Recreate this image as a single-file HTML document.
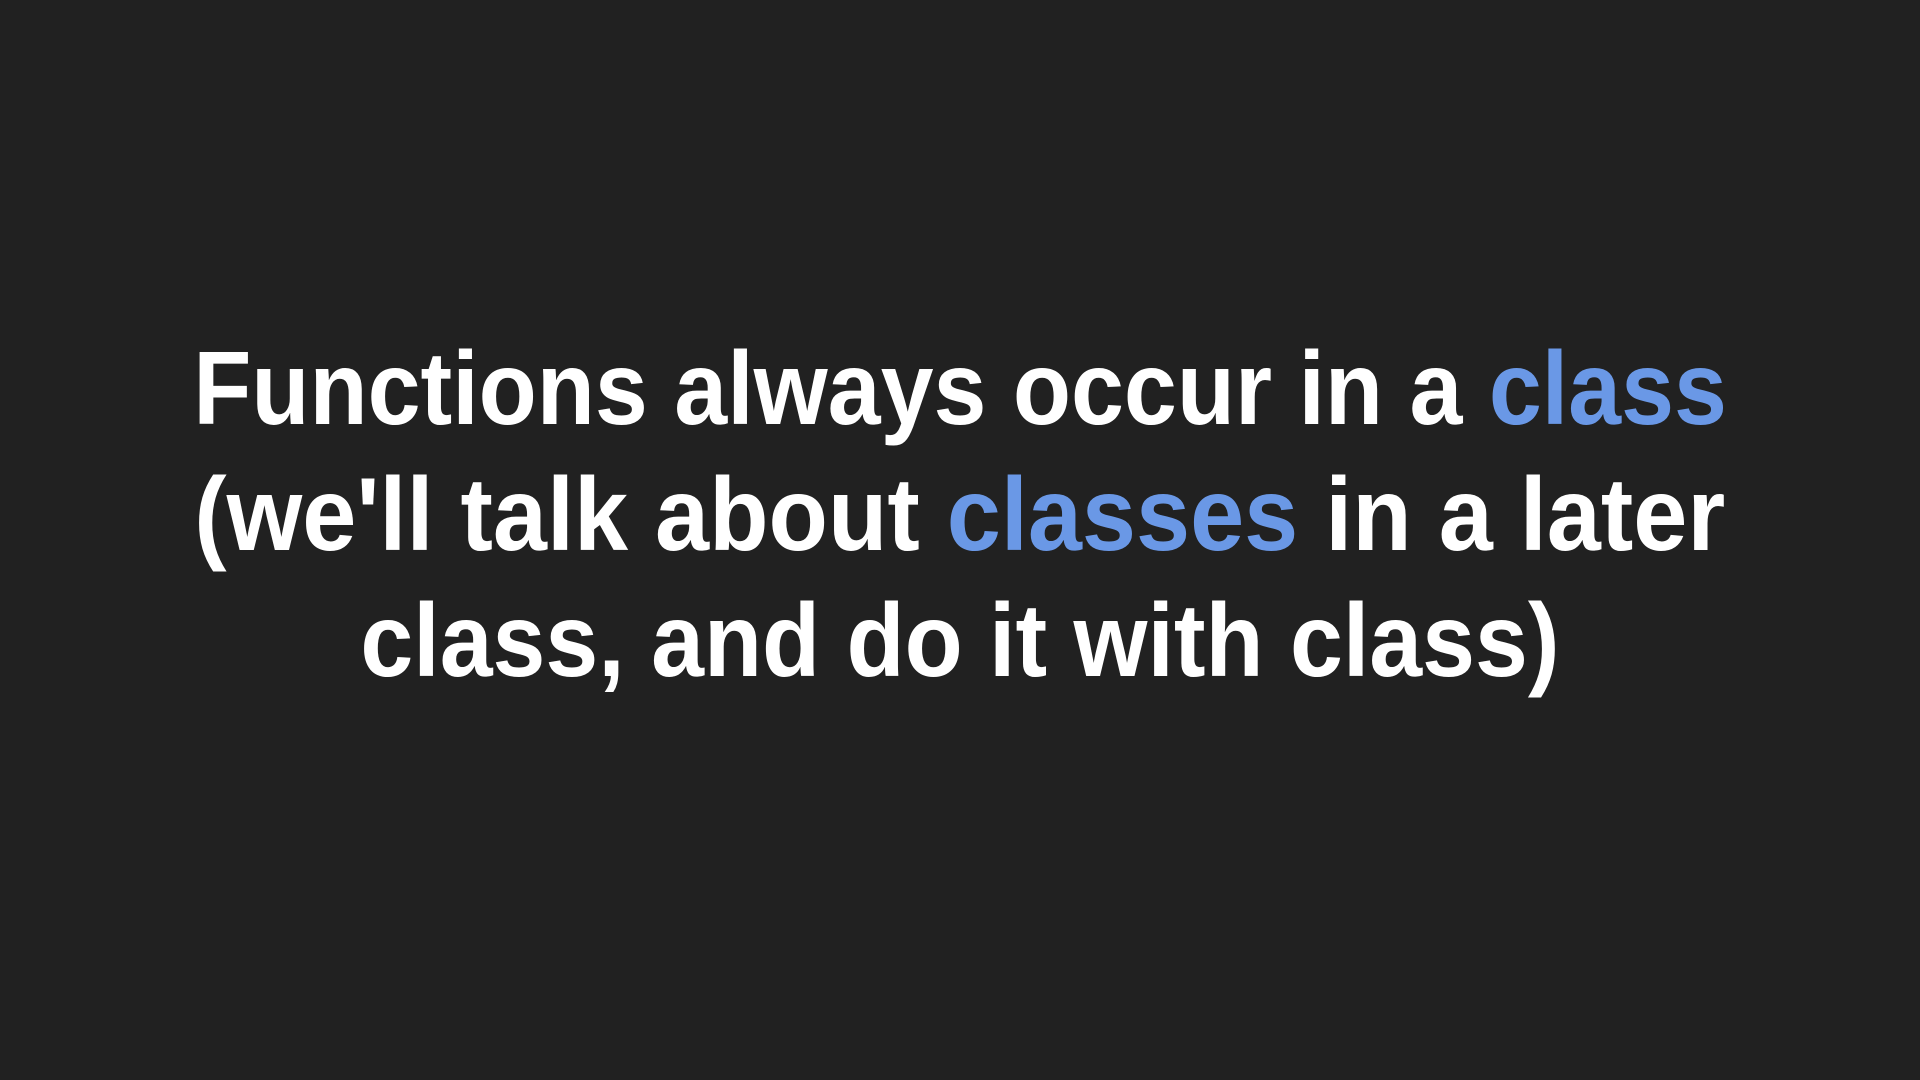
<!DOCTYPE html>
<html><head><meta charset="utf-8"><style>
html,body{margin:0;padding:0;width:1920px;height:1080px;background:#212121;overflow:hidden}
.wrap{position:absolute;top:326px;left:0;width:1920px;text-align:center;font-family:"Liberation Sans",sans-serif;font-weight:bold;font-size:104px;line-height:126px;color:#fff}
.l{display:block;white-space:nowrap}
.l span.in{display:inline-block;transform-origin:center}
.b{color:#6a98e6}
</style></head><body>
<div class="wrap">
<div class="l"><span class="in" style="transform:scaleX(0.915)">Functions always occur in a <span class="b">class</span></span></div>
<div class="l"><span class="in" style="transform:scaleX(0.935)">(we'll talk about <span class="b">classes</span> in a later</span></div>
<div class="l"><span class="in" style="transform:scaleX(0.914)">class, and do it with class)</span></div>
</div>
</body></html>
